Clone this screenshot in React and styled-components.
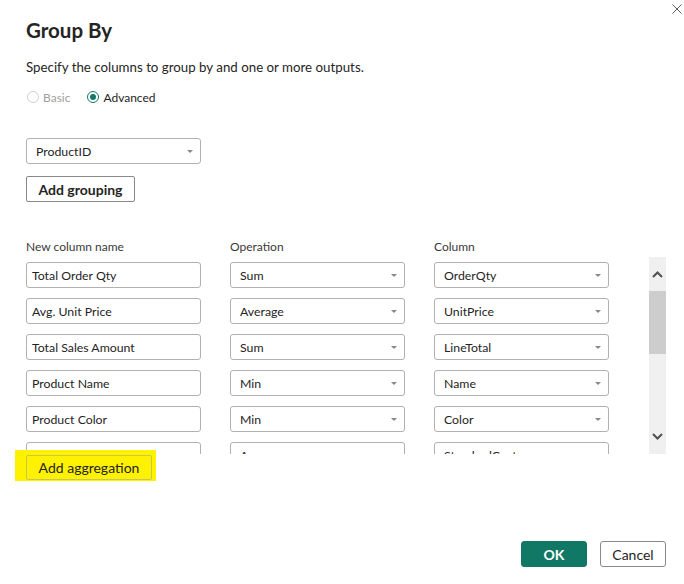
import React from 'react';
import styled, { createGlobalStyle } from 'styled-components';

const GlobalStyle = createGlobalStyle`
  html, body {
    margin: 0;
    padding: 0;
    background: #fff;
  }
  body {
    font-family: "Segoe UI", Lato, "Noto Sans", sans-serif;
    color: #252423;
  }
`;

const Dialog = styled.div`
  position: relative;
  width: 684px;
  height: 584px;
  box-sizing: border-box;
  padding: 16px 0 0 26px;
  display: flex;
  flex-direction: column;
  background: #fff;
`;

const CloseButton = styled.button`
  position: absolute;
  top: 2px;
  right: 0;
  width: 14px;
  height: 14px;
  padding: 0;
  border: none;
  background: transparent;
  display: flex;
  align-items: center;
  justify-content: center;
`;

const Title = styled.h1`
  margin: 0;
  font-size: 20.5px;
  line-height: 28px;
  font-weight: 700;
  color: #252423;
`;

const Description = styled.p`
  margin: 14px 0 0 0;
  font-size: 13.3px;
  line-height: 18px;
`;

const RadioRow = styled.div`
  display: flex;
  align-items: center;
  gap: 16px;
  margin-top: 11px;
  height: 20px;
`;

const RadioOption = styled.label`
  display: flex;
  align-items: center;
  gap: 4px;
  font-size: 12px;
  color: ${p => (p.disabled ? '#a19f9d' : '#252423')};
`;

const RadioDot = styled.span`
  width: 12px;
  height: 12px;
  border-radius: 50%;
  box-sizing: border-box;
  border: 1px solid ${p => (p.checked ? '#117865' : '#d2d0ce')};
  display: flex;
  align-items: center;
  justify-content: center;
  margin-left: 1px;
  &::after {
    content: '';
    display: ${p => (p.checked ? 'block' : 'none')};
    width: 6px;
    height: 6px;
    border-radius: 50%;
    background: #117865;
  }
`;

const Field = styled.div`
  width: 175px;
  height: 26px;
  box-sizing: border-box;
  border: 1px solid #b3b0ad;
  border-radius: 3px;
  display: flex;
  align-items: center;
  justify-content: space-between;
  padding: ${p => (p.select ? '0 7px 0 9px' : '0 5px')};
  font-size: 12.3px;
  white-space: nowrap;
  color: #252423;
  background: #fff;
`;

const Caret = styled.span`
  width: 0;
  height: 0;
  border-left: 3px solid transparent;
  border-right: 3px solid transparent;
  border-top: 3px solid #8a8886;
`;

const GroupingField = styled.div`
  margin-top: 31px;
`;

const Button = styled.button`
  box-sizing: border-box;
  height: 26px;
  padding: 0;
  border: 1px solid #8a8886;
  border-radius: 2px;
  background: #fff;
  font-family: inherit;
  font-size: 14px;
  font-weight: 700;
  white-space: nowrap;
  color: #252423;
  align-self: flex-start;
`;

const AddGroupingButton = styled(Button)`
  margin-top: 12px;
  width: 109px;
`;

const HeaderRow = styled.div`
  display: grid;
  grid-template-columns: 175px 175px 175px;
  column-gap: 29px;
  margin-top: 37px;
  font-size: 12px;
  line-height: 16px;
  color: #3b3a39;
`;

const ListArea = styled.div`
  display: flex;
  margin-top: 2px;
  height: 197px;
`;

const ListViewport = styled.div`
  width: 608px;
  flex-shrink: 0;
  height: 197px;
  overflow: hidden;
`;

const Rows = styled.div`
  display: flex;
  flex-direction: column;
  gap: 10px;
  padding-top: 5px;
`;

const Row = styled.div`
  display: grid;
  grid-template-columns: 175px 175px 175px;
  column-gap: 29px;
`;

const Scrollbar = styled.div`
  margin-left: 15px;
  width: 17px;
  flex-shrink: 0;
  height: 197px;
  background: #f0f0f0;
  display: flex;
  flex-direction: column;
`;

const ScrollArrow = styled.div`
  height: ${p => p.h}px;
  display: flex;
  align-items: center;
  justify-content: center;
`;

const ScrollThumb = styled.div`
  height: 63px;
  background: #cdcdcd;
`;

const ScrollTrack = styled.div`
  flex: 1;
`;

const Highlight = styled.div`
  align-self: flex-start;
  margin: -4px 0 0 -11px;
  padding: 5px 4px 1px 11px;
  background: #fff200;
`;

const AggregationButton = styled(Button)`
  width: 126px;
  height: 25px;
  font-weight: 400;
  border-color: #c9c64a;
  background: #fff200;
`;

const Footer = styled.div`
  display: flex;
  justify-content: flex-end;
  gap: 13px;
  margin-top: 60px;
  padding-right: 18px;
`;

const FooterButton = styled(Button)`
  width: ${p => p.w}px;
  background: ${p => (p.primary ? '#117865' : '#fff')};
  color: ${p => (p.primary ? '#fff' : '#252423')};
  border-color: ${p => (p.primary ? '#117865' : '#8a8886')};
  font-weight: ${p => (p.primary ? 700 : 400)};
  border-radius: 3px;
  height: 26px;
`;

const rows = [
  ['Total Order Qty', 'Sum', 'OrderQty'],
  ['Avg. Unit Price', 'Average', 'UnitPrice'],
  ['Total Sales Amount', 'Sum', 'LineTotal'],
  ['Product Name', 'Min', 'Name'],
  ['Product Color', 'Min', 'Color'],
  ['Avg. Cost', 'Average', 'StandardCost'],
];

const Select = ({ value }) => (
  <Field select>
    <span>{value}</span>
    <Caret />
  </Field>
);

const Chevron = ({ up }) => (
  <svg width="11" height="7" viewBox="0 0 11 7">
    <path
      d={up ? 'M1 6 L5.5 1.5 L10 6' : 'M1 1 L5.5 5.5 L10 1'}
      fill="none"
      stroke="#505050"
      strokeWidth="2"
    />
  </svg>
);

export default function App() {
  return (
    <>
      <GlobalStyle />
      <Dialog>
        <CloseButton aria-label="Close">
          <svg width="10" height="10" viewBox="0 0 10 10">
            <path d="M0.5 0.5 L9.5 9.5 M9.5 0.5 L0.5 9.5" stroke="#605e5c" strokeWidth="1" />
          </svg>
        </CloseButton>
        <Title>Group By</Title>
        <Description>Specify the columns to group by and one or more outputs.</Description>
        <RadioRow>
          <RadioOption disabled>
            <RadioDot />
            Basic
          </RadioOption>
          <RadioOption>
            <RadioDot checked />
            Advanced
          </RadioOption>
        </RadioRow>
        <GroupingField>
          <Select value="ProductID" />
        </GroupingField>
        <AddGroupingButton>Add grouping</AddGroupingButton>
        <HeaderRow>
          <span>New column name</span>
          <span>Operation</span>
          <span>Column</span>
        </HeaderRow>
        <ListArea>
          <ListViewport>
            <Rows>
              {rows.map(([name, op, col]) => (
                <Row key={name}>
                  <Field>{name}</Field>
                  <Select value={op} />
                  <Select value={col} />
                </Row>
              ))}
            </Rows>
          </ListViewport>
          <Scrollbar>
            <ScrollArrow h={34}>
              <Chevron up />
            </ScrollArrow>
            <ScrollThumb />
            <ScrollTrack />
            <ScrollArrow h={36}>
              <Chevron />
            </ScrollArrow>
          </Scrollbar>
        </ListArea>
        <Highlight>
          <AggregationButton>Add aggregation</AggregationButton>
        </Highlight>
        <Footer>
          <FooterButton primary w={66}>OK</FooterButton>
          <FooterButton w={66}>Cancel</FooterButton>
        </Footer>
      </Dialog>
    </>
  );
}
